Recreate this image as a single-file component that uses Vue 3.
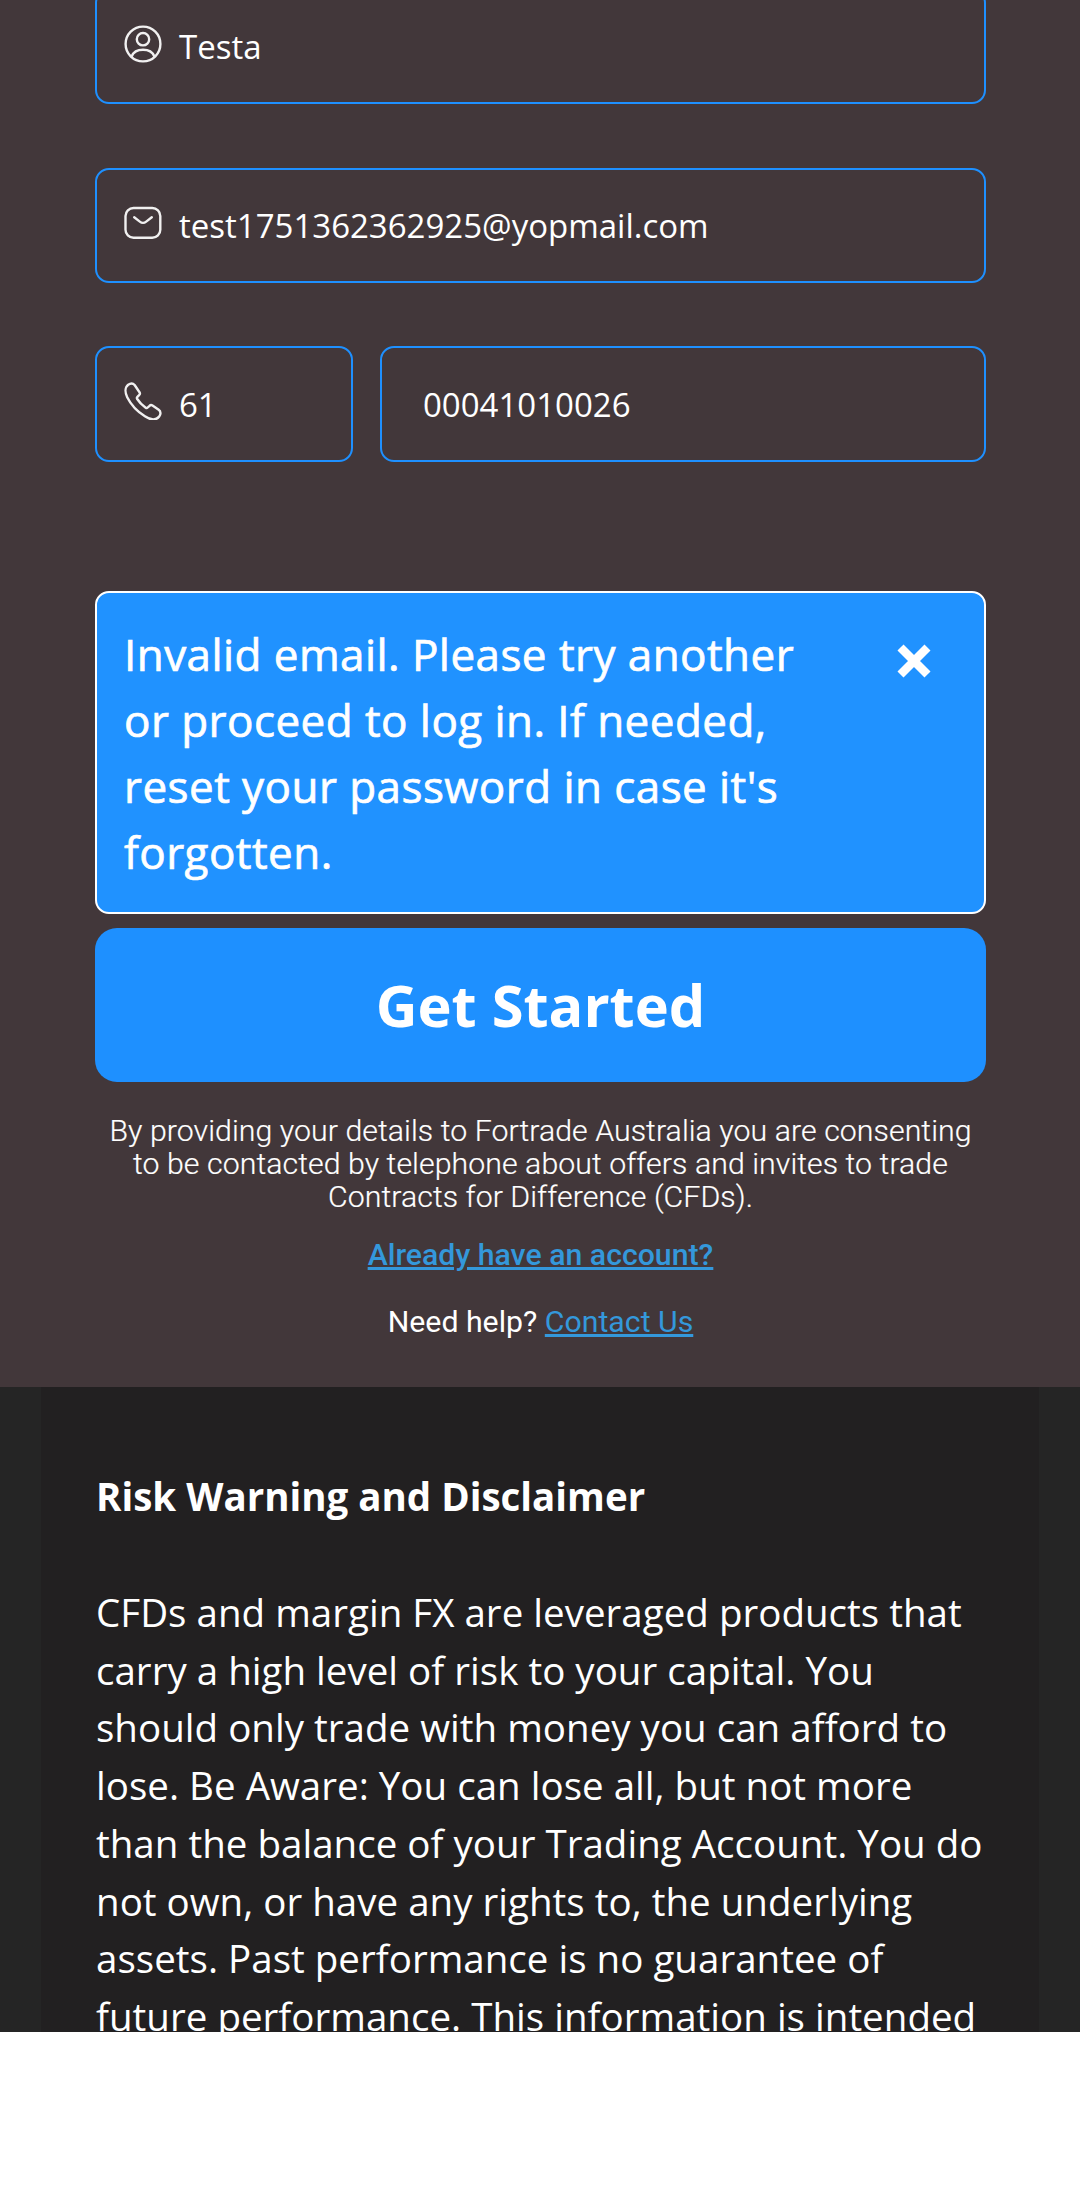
<script setup>
const disclaimer =
  "CFDs and margin FX are leveraged products that carry a high level of risk to your capital. You should only trade with money you can afford to lose. Be Aware: You can lose all, but not more than the balance of your Trading Account. You do not own, or have any rights to, the underlying assets. Past performance is no guarantee of future performance. This information is intended";
</script>

<template>
  <div class="page">
    <section class="signup">
      <div class="field first">
        <svg class="icon" viewBox="0 0 38 38">
          <circle cx="19" cy="19" r="17.4" />
          <circle cx="19" cy="14.2" r="6.2" />
          <path d="M7.6 31.5C9.5 26.8 14 24.8 19 24.8s9.500 2 11.400 6.700" />
        </svg>
        <span>Testa</span>
      </div>
      <div class="field email">
        <svg class="icon" viewBox="0 0 38 38">
          <rect x="1.500" y="4" width="34.800" height="29.800" rx="8" />
          <path d="M10.200 13.200l5.600 4.400c1.900 1.500 4.500 1.500 6.400 0l5.600-4.400" />
        </svg>
        <span>test1751362362925@yopmail.com</span>
      </div>
      <div class="phone-row">
        <div class="field code">
          <svg class="icon" viewBox="0 0 38 38">
            <path d="M4.200 2.700C6.300 1.200 9 1.100 10.600 3l4.900 7.200c.8 1.200.6 2-.4 3l-1.700 1.700c-.7.7-.7 1.300-.2 2.100 2.200 3.500 5 6.200 8.500 8.700.8.500 1.400.4 2-.2l1.800-1.700c.9-.9 1.900-1 3-.3l6.200 4.300c2.300 1.700 2.200 4.500.5 6.700-3.600 4.500-9.500 3-14.300-.2C13 29.300 6.900 22.600 3.200 15.200 1 10.600.8 5.200 4.200 2.700z" />
          </svg>
          <span>61</span>
        </div>
        <div class="field number"><span>00041010026</span></div>
      </div>
      <div class="alert">
        <p>Invalid email. Please try another or proceed to log in. If needed, reset your password in case it's forgotten.</p>
        <svg class="close" viewBox="0 0 34 34">
          <path d="M3.500 3.500l27 27M30.500 3.500l-27 27" />
        </svg>
      </div>
      <button class="cta">Get Started</button>
      <p class="consent">By providing your details to Fortrade Australia you are consenting<br />to be contacted by telephone about offers and invites to trade<br />Contracts for Difference (CFDs).</p>
      <p class="login"><a>Already have an account?</a></p>
      <p class="help">Need help? <a>Contact Us</a></p>
    </section>
    <section class="risk">
      <div class="panel">
        <h2>Risk Warning and Disclaimer</h2>
        <p>{{ disclaimer }}</p>
      </div>
    </section>
  </div>
</template>

<style>
body {
  margin: 0;
  background: #fff;
}
</style>

<style scoped>
.page {
  width: 1080px;
  height: 2032px;
  overflow: hidden;
  display: flex;
  flex-direction: column;
  font-family: "Open Sans", sans-serif;
  color: #fff;
}
p,
h2 {
  margin: 0;
}
.signup {
  box-sizing: border-box;
  height: 1387px;
  flex: none;
  padding: 0 94px 0 95px;
  background: #42373a;
  display: flex;
  flex-direction: column;
}
.field {
  box-sizing: border-box;
  height: 115px;
  flex: none;
  border: 2px solid #1e90ff;
  border-radius: 14px;
  padding: 0 27px;
  display: flex;
  align-items: center;
  gap: 17px;
  font-size: 33px;
}
.first {
  margin-top: -11px;
}
.email {
  margin-top: 64px;
}
.icon {
  width: 38px;
  height: 38px;
  margin-bottom: 6px;
  fill: none;
  stroke: #f1f0f0;
  stroke-width: 2.4;
  stroke-linecap: round;
  stroke-linejoin: round;
}
.phone-row {
  display: flex;
  gap: 27px;
  margin-top: 63px;
}
.phone-row .field {
  height: 116px;
}
.code {
  width: 258px;
}
.number {
  flex: 1;
  padding-left: 41px;
}
.alert {
  box-sizing: border-box;
  height: 323px;
  flex: none;
  margin-top: 129px;
  padding: 28px 52.600px 0 27px;
  border: 2px solid #fff;
  border-radius: 14px;
  background: #2092ff;
  display: flex;
  justify-content: space-between;
  font-size: 44px;
  line-height: 66px;
  font-weight: 500;
  letter-spacing: 0.440px;
  -webkit-text-stroke: 0.700px #fff;
}
.alert p {
  width: 700px;
}
.close {
  width: 34px;
  height: 34px;
  margin-top: 23px;
  stroke: #fff;
  stroke-width: 8.500;
}
.cta {
  flex: none;
  height: 154px;
  margin-top: 14px;
  padding: 0 0 2px;
  border: 0;
  border-radius: 22px;
  background: #1e90ff;
  color: #fff;
  font: 700 57.75px "Open Sans", sans-serif;
}
.consent,
.login,
.help {
  font-family: Roboto, sans-serif;
  font-size: 30.25px;
  line-height: 33px;
  text-align: center;
  white-space: nowrap;
}
.consent {
  margin-top: 32px;
  font-weight: 300;
  letter-spacing: 0.070px;
  -webkit-text-stroke: 0.200px #fff;
}
.login {
  margin-top: 25px;
  font-weight: 500;
}
.help {
  margin-top: 34px;
}
a {
  color: #3498db;
  text-decoration: underline;
}
.risk {
  flex: 1;
  min-height: 0;
  padding: 0 41px;
  background: #252525;
}
.panel {
  box-sizing: border-box;
  height: 645px;
  padding: 81px 50px 0 55px;
  background: #222021;
  font-size: 38.5px;
  line-height: 57.75px;
}
.panel p {
  letter-spacing: 0.020px;
}
h2 {
  font-size: 38.5px;
  line-height: 57.75px;
  font-weight: 700;
  margin-bottom: 58px;
}
</style>
